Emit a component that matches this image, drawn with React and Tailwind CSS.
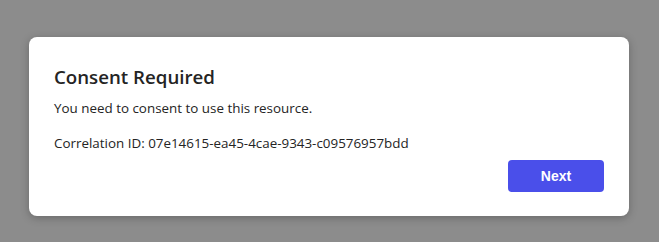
import React from "react";

const App = () => {
  return (
    <div
      className="h-[242px] w-full bg-[#8c8c8c] pt-[37px] pl-[29px]"
      style={{ fontFamily: '"Segoe UI", "Open Sans", "Noto Sans", sans-serif' }}
    >
      <div className="w-[600px] h-[179px] rounded-lg bg-white shadow-[0_2px_8px_rgba(0,0,0,0.25)] px-[25px] pt-[28px] flex flex-col">
        <h1 className="text-[18.7px] font-semibold text-[#242424] leading-6">Consent Required</h1>
        <p className="mt-[9px] text-[13.4px] text-[#242424] leading-5">
          You need to consent to use this resource.
        </p>
        <p className="mt-[15px] text-[13.4px] text-[#242424] leading-5">
          Correlation ID: 07e14615-ea45-4cae-9343-c09576957bdd
        </p>
        <div className="mt-[7px] flex justify-end">
          <button
            className="w-[96px] h-[32px] rounded-[4px] bg-[#4a4fea] text-white text-[14px] font-bold"
            style={{ fontFamily: '"Liberation Sans", Arial, sans-serif' }}
          >
            Next
          </button>
        </div>
      </div>
    </div>
  );
};

export default App;
